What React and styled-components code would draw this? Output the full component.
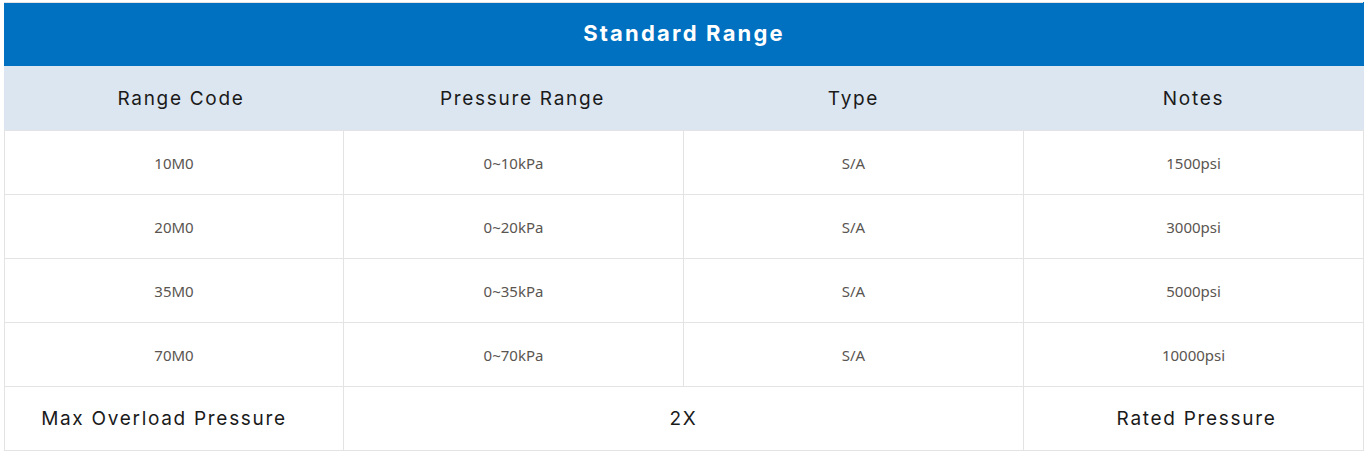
import React from "react";
import styled, { createGlobalStyle } from "styled-components";

const Global = createGlobalStyle`
  html, body { margin: 0; padding: 0; background: #fff; }
`;

const Wrap = styled.div`
  padding: 2px 4px;
`;

const Table = styled.table`
  border-collapse: collapse;
  table-layout: fixed;
  width: 1360px;
  border: 1px solid #e3e3e3;
`;

const TitleCell = styled.th`
  background: #0070c0;
  color: #fff;
  height: 59px;
  padding: 0 0 3px;
  font-family: Inter, "Noto Sans", sans-serif;
  font-weight: 700;
  font-size: 22px;
  letter-spacing: 2.2px;
  text-align: center;
  border: 1px solid #0070c0;
  border-top-color: #e3e3e3;
`;

const HeadCell = styled.th`
  background: #dce6f1;
  height: 64px;
  padding: 0 0 0 ${(p) => p.$shift || 0}px;
  font-family: Inter, "Noto Sans", sans-serif;
  font-weight: 400;
  font-size: 19px;
  letter-spacing: 1.7px;
  color: #1a1a1a;
  text-align: center;
  border: 1px solid #dce6f1;
  border-bottom-color: #e3e3e3;
`;

const Cell = styled.td`
  height: 63px;
  padding: 0 ${(p) => p.$padRight || 0}px 0 ${(p) => p.$padLeft || 0}px;
  text-align: center;
  border: 1px solid #e3e3e3;
  font-family: ${(p) => (p.$big ? `Inter, "Noto Sans", sans-serif` : `"Noto Sans", sans-serif`)};
  font-size: ${(p) => (p.$big ? "19px" : "15px")};
  letter-spacing: ${(p) => (p.$big ? "1.7px" : "0")};
  color: ${(p) => (p.$big ? "#1a1a1a" : "#5a5550")};
`;

const rows = [
  ["10M0", "0~10kPa", "S/A", "1500psi"],
  ["20M0", "0~20kPa", "S/A", "3000psi"],
  ["35M0", "0~35kPa", "S/A", "5000psi"],
  ["70M0", "0~70kPa", "S/A", "10000psi"],
];

const headers = [
  ["Range Code", 14],
  ["Pressure Range", 18],
  ["Type", 0],
  ["Notes", 0],
];

export default function App() {
  return (
    <>
      <Global />
      <Wrap>
        <Table>
          <colgroup>
            <col style={{ width: 339 }} />
            <col style={{ width: 340 }} />
            <col style={{ width: 340 }} />
            <col style={{ width: 340 }} />
          </colgroup>
          <thead>
            <tr>
              <TitleCell colSpan={4}>Standard Range</TitleCell>
            </tr>
            <tr>
              {headers.map(([h, s]) => (
                <HeadCell key={h} $shift={s}>
                  {h}
                </HeadCell>
              ))}
            </tr>
          </thead>
          <tbody>
            {rows.map((r) => (
              <tr key={r[0]}>
                {r.map((c, i) => (
                  <Cell key={i}>{c}</Cell>
                ))}
              </tr>
            ))}
            <tr>
              <Cell $big $padRight={20}>Max Overload Pressure</Cell>
              <Cell $big colSpan={2}>2X</Cell>
              <Cell $big $padLeft={6}>Rated Pressure</Cell>
            </tr>
          </tbody>
        </Table>
      </Wrap>
    </>
  );
}
